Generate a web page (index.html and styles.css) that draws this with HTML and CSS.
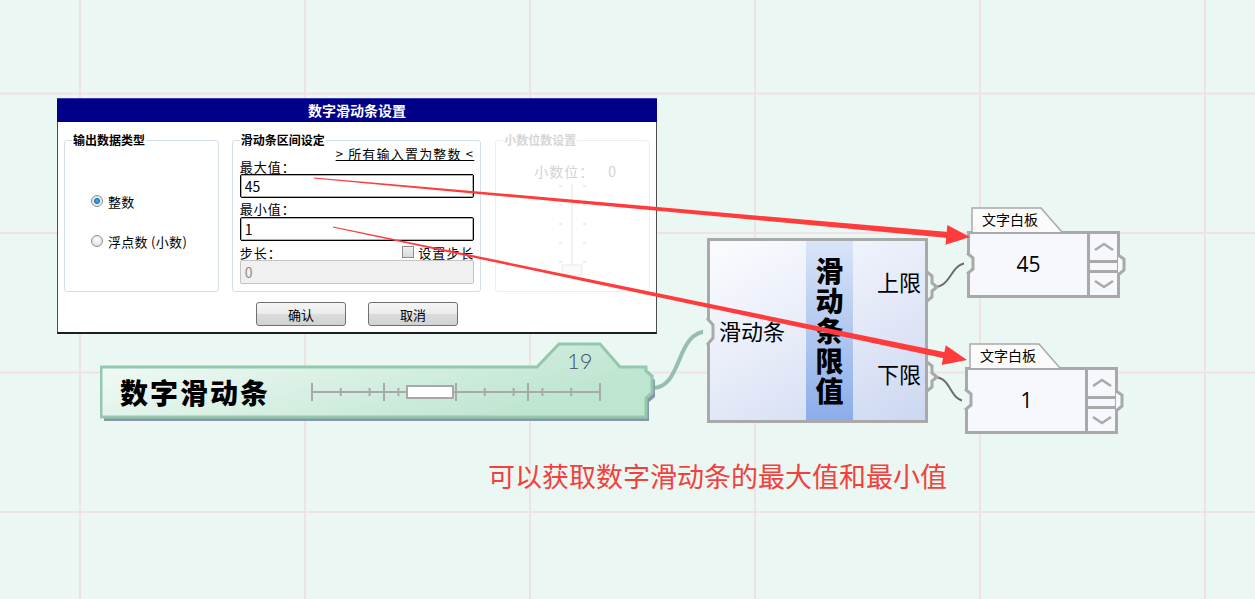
FILE: index.html
```html
<!DOCTYPE html>
<html lang="zh-CN">
<head>
<meta charset="utf-8">
<title>数字滑动条限值</title>
<link rel="stylesheet" href="styles.css">
</head>
<body>
<div class="canvas">
  <svg class="layer" width="1255" height="599" viewBox="0 0 1255 599">
    <path class="wire-green" d="M652,388 C684,388 674,331 709,331"/>
    <path class="wire-dark" d="M934,287 C952,287 950,263 968,263"/>
    <path class="wire-dark" d="M934,377 C952,377 949,401 966,401"/>
  </svg>

  <section class="dialog">
    <header class="dlg-title">数字滑动条设置</header>
    <div class="dlg-groups">
      <fieldset class="grp grp-type">
        <legend>输出数据类型</legend>
        <div class="radios">
          <div class="radio"><span class="rdot on"></span>整数</div>
          <div class="radio"><span class="rdot"></span>浮点数 (小数)</div>
        </div>
      </fieldset>
      <fieldset class="grp grp-range">
        <legend>滑动条区间设定</legend>
        <div class="link-row"><span class="link">&gt; 所有输入置为整数 &lt;</span></div>
        <div class="lbl">最大值：</div>
        <div class="field">45</div>
        <div class="lbl lbl-gap">最小值：</div>
        <div class="field field-gap">1</div>
        <div class="step-row"><span>步长：</span><span class="chk"><span class="chkbox"></span>设置步长</span></div>
        <div class="field disabled">0</div>
      </fieldset>
      <fieldset class="grp grp-dec">
        <legend>小数位数设置</legend>
        <div class="dec-row"><span>小数位：</span><span>0</span></div>
        <svg class="vslider" width="40" height="96" viewBox="0 0 40 96">
          <line x1="20" y1="2" x2="20" y2="90"/>
          <g class="vticks">
            <line x1="7" y1="4" x2="10" y2="4"/><line x1="31" y1="4" x2="34" y2="4"/>
            <line x1="7" y1="23" x2="10" y2="23"/><line x1="31" y1="23" x2="34" y2="23"/>
            <line x1="7" y1="42" x2="10" y2="42"/><line x1="31" y1="42" x2="34" y2="42"/>
            <line x1="7" y1="61" x2="10" y2="61"/><line x1="31" y1="61" x2="34" y2="61"/>
            <line x1="7" y1="80" x2="10" y2="80"/><line x1="31" y1="80" x2="34" y2="80"/>
          </g>
          <rect x="10" y="83" width="20" height="10" rx="1"/>
        </svg>
      </fieldset>
    </div>
    <div class="dlg-buttons">
      <button class="btn" type="button">确认</button>
      <button class="btn" type="button">取消</button>
    </div>
  </section>

  <div class="slider-node">
    <svg class="node-shape" width="560" height="84" viewBox="0 0 560 84">
      <defs>
        <linearGradient id="sliderFill" x1="0" y1="0" x2="1" y2="0.4">
          <stop offset="0" stop-color="#f7fcfa"/>
          <stop offset="1" stop-color="#bde5d0"/>
        </linearGradient>
      </defs>
      <path class="shape-shadow" transform="translate(3,4)" d="M1,27 H437 L459,4 H500 L520,27 H546 V31 L552,36 V53 L546,58 V77 H1 Z"/>
      <path class="shape-body" d="M1,27 H437 L459,4 H500 L520,27 H546 V31 L552,36 V53 L546,58 V77 H1 Z"/>
    </svg>
    <span class="slider-value">19</span>
    <div class="slider-main">
      <span class="slider-title">数字滑动条</span>
      <svg class="track" width="294" height="24" viewBox="0 0 294 24">
        <line x1="2" y1="12" x2="290" y2="12"/>
        <line x1="2" y1="3" x2="2" y2="21"/>
        <line x1="74" y1="3" x2="74" y2="21"/>
        <line x1="146" y1="3" x2="146" y2="21"/>
        <line x1="218" y1="3" x2="218" y2="21"/>
        <line x1="290" y1="3" x2="290" y2="21"/>
        <line x1="30.8" y1="8" x2="30.8" y2="16"/>
        <line x1="59.6" y1="8" x2="59.6" y2="16"/>
        <line x1="88.4" y1="8" x2="88.4" y2="16"/>
        <line x1="174.8" y1="8" x2="174.8" y2="16"/>
        <line x1="203.6" y1="8" x2="203.6" y2="16"/>
        <line x1="232.4" y1="8" x2="232.4" y2="16"/>
        <line x1="261.2" y1="8" x2="261.2" y2="16"/>
        <rect class="thumb" x="97" y="6" width="46" height="12"/>
      </svg>
    </div>
  </div>

  <div class="fn-node">
    <div class="fn-in"><span>滑动条</span></div>
    <div class="fn-band"><span class="fn-name">滑动条限值</span></div>
    <div class="fn-out"><span>上限</span><span>下限</span></div>
  </div>

  <div class="board board-max">
    <div class="board-tab">
      <svg class="tab-shape" width="92" height="25" viewBox="0 0 92 25"><path d="M1,25 V1 H70 L91,25"/></svg>
      <span class="tab-text">文字白板</span>
    </div>
    <div class="board-body">
      <div class="board-value">45</div>
      <div class="board-spin">
        <div class="spin spin-up"><svg width="20" height="10" viewBox="0 0 20 10"><polyline points="1,8 10,2 19,8"/></svg></div>
        <div class="spin-gap"></div>
        <div class="spin spin-down"><svg width="20" height="10" viewBox="0 0 20 10"><polyline points="1,2 10,8 19,2"/></svg></div>
      </div>
    </div>
  </div>

  <div class="board board-min">
    <div class="board-tab">
      <svg class="tab-shape" width="92" height="25" viewBox="0 0 92 25"><path d="M1,25 V1 H70 L91,25"/></svg>
      <span class="tab-text">文字白板</span>
    </div>
    <div class="board-body">
      <div class="board-value">1</div>
      <div class="board-spin">
        <div class="spin spin-up"><svg width="20" height="10" viewBox="0 0 20 10"><polyline points="1,8 10,2 19,8"/></svg></div>
        <div class="spin-gap"></div>
        <div class="spin spin-down"><svg width="20" height="10" viewBox="0 0 20 10"><polyline points="1,2 10,8 19,2"/></svg></div>
      </div>
    </div>
  </div>

  <p class="caption">可以获取数字滑动条的最大值和最小值</p>

  <svg class="layer" width="1255" height="599" viewBox="0 0 1255 599">
    <g class="port">
      <path class="port-cut" d="M703,320 L707,320 L713,326 L713,337 L707,343 L703,343 Z"/>
      <path d="M707,318 L713,325 L713,338 L707,345"/>
      <path d="M927,272 L932,276 L932,283 L937,287 L932,291 L932,297 L927,301"/>
      <path d="M927,362 L932,366 L932,373 L937,377 L932,381 L932,387 L927,391"/>
      <path class="port-cut" d="M964,254 L969,254 L973,258 L973,269 L969,273 L964,273 Z"/>
      <path d="M967,253 L973,258 V269 L967,274"/>
      <path class="port-cut" d="M962,390 L967,390 L971,394 L971,405 L967,409 L962,409 Z"/>
      <path d="M965,389 L971,394 V405 L965,410"/>
      <path class="port-board" d="M1118,255 L1124,259 V270 L1118,275"/>
      <path class="port-board" d="M1116,391 L1122,395 V406 L1116,411"/>
    </g>
    <g class="arrow" transform="translate(314,178) rotate(5.14)">
      <polygon points="0,-0.6 637,-3 637,3 0,0.6"/>
      <polygon points="635,-10 658.6,0 635,10"/>
    </g>
    <g class="arrow" transform="translate(333,227) rotate(11.85)">
      <polygon points="0,-0.6 626,-3 626,3 0,0.6"/>
      <polygon points="624,-10 647.8,0 624,10"/>
    </g>
  </svg>
</div>
</body>
</html>
```

FILE: styles.css
```css
html, body {
  margin: 0;
  padding: 0;
}

body {
  width: 1255px;
  height: 599px;
  overflow: hidden;
  font-family: "Noto Sans CJK SC", "Noto Sans", sans-serif;
  background-color: #eaf7f2;
  background-image:
    linear-gradient(to right, #efe2e3 2px, transparent 2px),
    linear-gradient(to bottom, #efe2e3 2px, transparent 2px);
  background-size: 225px 139.5px;
  background-position: 79px 92.5px;
}

.canvas {
  position: relative;
  width: 1255px;
  height: 599px;
}

.layer {
  position: absolute;
  left: 0;
  top: 0;
  pointer-events: none;
}

.wire-green {
  fill: none;
  stroke: #98bfad;
  stroke-width: 4;
}

.wire-dark {
  fill: none;
  stroke: #6c6c6c;
  stroke-width: 2;
}

/* ---------- dialog ---------- */
.dialog {
  position: absolute;
  left: 57px;
  top: 98px;
  width: 600px;
  box-sizing: border-box;
  background: #fff;
  border: 1px solid #4d4d4d;
  border-top: none;
  border-bottom: 2px solid #1e1e1e;
  font-size: 13px;
  color: #000;
}

.dlg-title {
  height: 24px;
  margin: 0 -1px;
  background: #000088;
  border-top: 1px solid #3a3aa8;
  box-sizing: border-box;
  color: #fff;
  font-weight: bold;
  font-size: 14px;
  line-height: 23px;
  text-align: center;
}

.dlg-groups {
  display: flex;
  gap: 13px;
  padding: 11px 6px 0 6px;
}

.grp {
  margin: 0;
  padding: 0 7px;
  border: 1px solid #d3dee8;
  border-radius: 3px;
  height: 159px;
  box-sizing: border-box;
  min-inline-size: 0;
}

.grp legend {
  padding: 0 1px;
  font-size: 12px;
  font-weight: bold;
  line-height: 14px;
}

.grp-type {
  width: 155px;
}

.grp-range {
  width: 250px;
  padding-right: 6px;
}

.grp-dec {
  width: 155px;
  margin-left: 1px;
  border-color: #eeeeee;
}

.grp-dec legend {
  color: #d6d6d6;
}

.radios {
  display: flex;
  flex-direction: column;
  gap: 22px;
  padding-top: 45px;
  padding-left: 19px;
}

.radio {
  display: flex;
  align-items: center;
  gap: 5px;
  height: 18px;
  font-size: 13px;
  letter-spacing: 0.3px;
}

.rdot {
  width: 12px;
  height: 12px;
  box-sizing: border-box;
  border-radius: 50%;
  border: 1px solid #8e8e8e;
  background: radial-gradient(circle at 50% 40%, #ffffff 0, #e2e2e2 70%, #cfcfcf 100%);
}

.rdot.on {
  background: radial-gradient(circle at 50% 50%, #4fb3ea 0, #1d78b8 2.5px, #dfe9ef 3.5px, #f4f4f4 100%);
}

.link-row {
  display: flex;
  justify-content: flex-end;
  height: 13px;
  line-height: 13px;
}

.link {
  text-decoration: underline;
  text-underline-offset: 1px;
  font-size: 13px;
  letter-spacing: 1.2px;
}

.lbl {
  height: 14px;
  line-height: 14px;
  font-size: 13px;
  letter-spacing: 1px;
}

.lbl-gap {
  margin-top: 4px;
}

.field {
  height: 24px;
  box-sizing: border-box;
  border: 1px solid #000;
  box-shadow: inset 0 0 0 1px rgba(0, 0, 0, 0.3);
  border-radius: 2px;
  padding-left: 4px;
  font-size: 14px;
  line-height: 22px;
}

.field-gap {
  margin-top: 1px;
}

.field.disabled {
  border-color: #c4c4c4;
  box-shadow: none;
  background: #f0f0f0;
  color: #8c8c8c;
}

.step-row {
  display: flex;
  justify-content: space-between;
  align-items: center;
  height: 16px;
  margin-top: 3px;
  font-size: 13px;
  letter-spacing: 1px;
}

.chk {
  display: flex;
  align-items: center;
  gap: 4px;
}

.chkbox {
  width: 12px;
  height: 12px;
  box-sizing: border-box;
  border: 1px solid #8e8e8e;
  background: linear-gradient(#f0f0f0, #d9d9d9);
}

.dec-row {
  display: flex;
  justify-content: center;
  gap: 14px;
  margin-top: 17px;
  padding-left: 6px;
  height: 14px;
  line-height: 14px;
  font-size: 14px;
  letter-spacing: 1px;
  color: #d2d2d2;
}

.vslider {
  display: block;
  margin: 4px auto 0;
  position: relative;
  left: -1px;
}

.vslider line {
  stroke: #ececec;
  stroke-width: 1.5;
}

.vslider .vticks line {
  stroke: #e6e6e6;
}

.vslider rect {
  fill: #fafafa;
  stroke: #e8e8e8;
}

.dlg-buttons {
  display: flex;
  justify-content: center;
  gap: 22px;
  padding: 10px 0 6px;
}

.btn {
  width: 90px;
  height: 24px;
  box-sizing: border-box;
  border: 1px solid #707070;
  border-radius: 3px;
  background: linear-gradient(#f6f6f6 0%, #ebebeb 50%, #dcdcdc 51%, #d2d2d2 100%);
  font-family: "Noto Sans CJK SC", "Noto Sans", sans-serif;
  font-size: 13px;
  color: #000;
  padding: 0;
}

/* ---------- slider node ---------- */
.slider-node {
  position: absolute;
  left: 100px;
  top: 340px;
  width: 560px;
  height: 84px;
}

.node-shape {
  position: absolute;
  left: 0;
  top: 0;
}

.shape-shadow {
  fill: #8797a5;
}

.shape-body {
  fill: url(#sliderFill);
  stroke: #93c8ad;
  stroke-width: 3;
}

.slider-value {
  position: absolute;
  left: 467px;
  top: 8px;
  font-family: "Lato", "Open Sans", sans-serif;
  font-weight: 300;
  font-size: 22px;
  line-height: 26px;
  color: #4a4a66;
}

.slider-main {
  position: relative;
  display: flex;
  align-items: center;
  gap: 40px;
  height: 50px;
  margin-top: 27px;
  padding-left: 20px;
}

.slider-title {
  font-size: 28px;
  font-weight: 900;
  letter-spacing: 2px;
  line-height: 34px;
  color: #000;
}

.track line {
  stroke: #a9a9a9;
  stroke-width: 2;
}

.track .thumb {
  fill: #fff;
  stroke: #a9a9a9;
  stroke-width: 2;
}

/* ---------- function node ---------- */
.fn-node {
  position: absolute;
  left: 707px;
  top: 238px;
  width: 221px;
  height: 185px;
  box-sizing: border-box;
  border: 3px solid #a9a9a9;
  display: flex;
  background: linear-gradient(150deg, #fbfcff 0%, #e6ebf8 50%, #ccd7f1 100%);
}

.fn-in {
  width: 96px;
  display: flex;
  align-items: center;
  padding-left: 9px;
  padding-bottom: 2px;
  box-sizing: border-box;
  font-size: 22px;
  line-height: 26px;
}

.fn-band {
  width: 47px;
  display: flex;
  align-items: center;
  justify-content: center;
  background: linear-gradient(#d9e4f8, #8badea);
}

.fn-name {
  writing-mode: vertical-rl;
  text-orientation: upright;
  font-size: 28px;
  font-weight: 900;
  letter-spacing: 2px;
  line-height: 30px;
  margin-top: 3px;
}

.fn-out {
  flex: 1;
  display: flex;
  flex-direction: column;
  align-items: flex-end;
  gap: 66px;
  padding: 27px 4px 0 0;
  font-size: 22px;
  line-height: 26px;
}

/* ---------- text boards ---------- */
.board {
  position: absolute;
  width: 153px;
}

.board-max {
  left: 967px;
  top: 207px;
}

.board-min {
  left: 965px;
  top: 343px;
}

.board-tab {
  position: relative;
  height: 24px;
  margin-left: 4px;
}

.tab-shape {
  position: absolute;
  left: 0;
  top: 0;
}

.tab-shape path {
  fill: #fbfbfb;
  stroke: #a9a9a9;
  stroke-width: 1.5;
}

.tab-text {
  position: relative;
  display: block;
  padding-left: 11px;
  font-size: 14px;
  line-height: 25px;
}

.board-body {
  display: flex;
  height: 67px;
  box-sizing: border-box;
  border: 3px solid #a9a9a9;
  background: #f7f8fd;
}

.board-value {
  flex: 1;
  display: flex;
  align-items: center;
  justify-content: center;
  font-family: "Open Sans", "Noto Sans", sans-serif;
  font-size: 21px;
  padding-bottom: 2px;
}

.board-spin {
  width: 27px;
  display: flex;
  flex-direction: column;
  border-left: 3px solid #a9a9a9;
}

.spin {
  display: flex;
  align-items: center;
  justify-content: center;
}

.spin-up {
  height: 26px;
  border-bottom: 3px solid #a9a9a9;
}

.spin-gap {
  height: 7px;
}

.spin-down {
  flex: 1;
  border-top: 3px solid #a9a9a9;
}

.spin polyline {
  fill: none;
  stroke: #a9a9a9;
  stroke-width: 2.5;
}

.port path {
  fill: none;
  stroke: #a9a9a9;
  stroke-width: 3;
}

.port .port-cut {
  fill: #eaf7f2;
  stroke: none;
}

.port .port-board {
  fill: #f7f8fd;
}

.arrow polygon {
  fill: #ff3b3b;
}

.caption {
  position: absolute;
  left: 488px;
  top: 459px;
  margin: 0;
  font-size: 27px;
  line-height: 34px;
  color: #f4403c;
  white-space: nowrap;
}
```
